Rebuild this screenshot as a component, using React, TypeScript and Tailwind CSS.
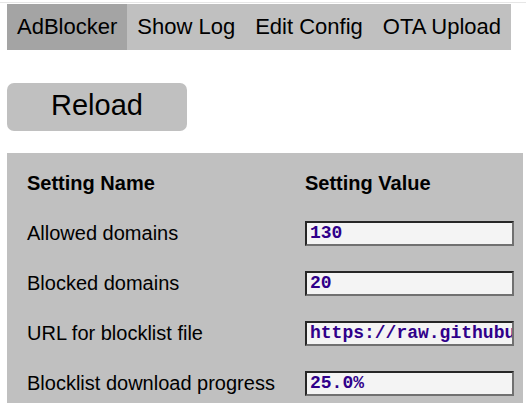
import React from 'react';

const tabs = ['AdBlocker', 'Show Log', 'Edit Config', 'OTA Upload'];

const settings = [
  { name: 'Allowed domains', value: '130' },
  { name: 'Blocked domains', value: '20' },
  { name: 'URL for blocklist file', value: 'https://raw.githubusercontent.com/StevenBlack/hosts/master/hosts' },
  { name: 'Blocklist download progress', value: '25.0%' },
];

const App = () => {
  return (
    <div className="w-[526px] h-[417px] bg-white font-['Liberation_Sans',Arial,sans-serif] text-black overflow-hidden">
      <div className="h-[3px] border-b border-[#e6e6e6]" />
      <nav className="mx-[7px] mt-[1px] w-[504px] h-[46px] flex bg-[#c0c0c0]">
        {tabs.map((t, i) => (
          <div
            key={t}
            className={`h-full flex items-center px-[10px] text-[22px] leading-none ${
              i === 0 ? 'bg-[#a4a4a4]' : ''
            }`}
          >
            {t}
          </div>
        ))}
      </nav>

      <button className="ml-[7px] mt-[33px] w-[180px] h-[48px] rounded-[7px] bg-[#c0c0c0] text-[29px] leading-none flex items-center justify-center pb-[3px]">
        Reload
      </button>

      <div className="ml-[7px] mt-[22px] w-[516px] h-[250px] bg-[#c0c0c0] pt-[5px]">
        <div className="h-[50px] flex items-center pl-[20px] text-[20px] font-bold">
          <div className="w-[278px]">Setting Name</div>
          <div>Setting Value</div>
        </div>
        {settings.map((s) => (
          <div key={s.name} className="h-[50px] flex items-center pl-[20px] text-[20px]">
            <div className="w-[278px]">{s.name}</div>
            <input
              readOnly
              value={s.value}
              className="w-[209px] h-[25px] bg-[#f4f4f4] border-2 border-t-[#262626] border-l-[#262626] border-r-[#707070] border-b-[#707070] pl-[3px] font-['Liberation_Mono','Courier_New',monospace] font-bold text-[18px] text-[#30008a] outline-none"
            />
          </div>
        ))}
      </div>
    </div>
  );
};

export default App;
